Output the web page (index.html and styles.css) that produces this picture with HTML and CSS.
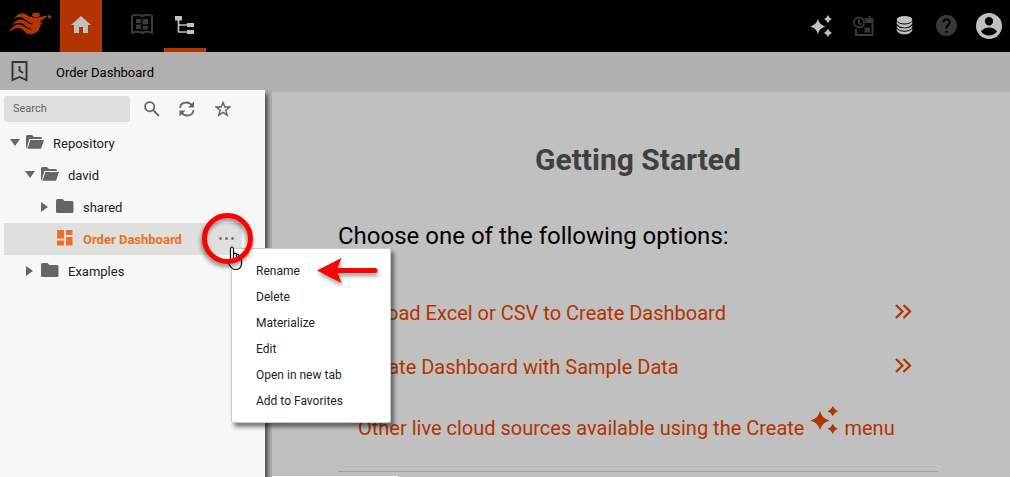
FILE: index.html
```html
<!DOCTYPE html>
<html lang="en">
<head>
<meta charset="utf-8">
<title>Order Dashboard</title>
<link rel="stylesheet" href="styles.css">
</head>
<body>
<svg class="defs" width="0" height="0">
  <symbol id="sparkles" viewBox="0 0 27 27"><path d="M9.7 4.5 C11.3 10 13.500 12.300 19.2 14 C13.500 15.700 11.3 18 9.7 23.5 C8.100 18 5.700 15.700 0 14 C5.700 12.300 8.100 10 9.7 4.5Z M22 0 Q23.300 3.700 27 5 Q23.300 6.300 22 10 Q20.700 6.300 17 5 Q20.700 3.700 22 0Z M22 17 Q23.300 20.700 27 22 Q23.300 23.300 22 27 Q20.700 23.300 17 22 Q20.700 20.700 22 17Z"/></symbol>
  <symbol id="folder" viewBox="0 0 18 14"><path d="M1.5 0H6.5L8.5 2H16Q17.500 2 17.500 3.5V12.5Q17.500 14 16 14H1.5Q0 14 0 12.5V1.5Q0 0 1.5 0Z"/></symbol>
  <symbol id="folder-open" viewBox="0 0 18 14"><path d="M1.500 0H6L8 2H14.500Q16 2 16 3.500V4H3.500L1.300 11V13.500Q0 13 0 12V1.500Q0 0 1.500 0Z M4.300 5H18L15.300 13Q15 13.700 14.300 13.700H1.600Z"/></symbol>
  <symbol id="chevrons" viewBox="0 0 17 15"><path d="M1 1 7.500 7.500 1 14M8.500 1 15 7.500 8.500 14" fill="none" stroke="currentColor" stroke-width="2.300"/></symbol>
</svg>
<header class="topbar">
  <svg class="logo" width="44" height="24" viewBox="0 0 44 24">
    <path d="M5 7C8 1.500 13-.5 18 3C22 6 27 6 31 5L37 3.500 38.500 4.500 32 8.500 31 11 34.500 9.500 31 14Q31 18 27 20.500C23 23.500 18 22.500 15 19C11 14.500 7 15 0 20C4 13 10 10.500 15 14.500C19 17.500 22 18 23.500 17C18 17 17 13 13 11.500C9 10 6 11 2.500 14C6 8 11 6 16 9C20 11.500 22 13 24.500 12C19 11 17 7 13 5.500C10 4.500 8 5 5 7Z" fill="#b23400"/>
    <ellipse cx="27" cy="3" rx="4" ry="2.200" fill="#b23400"/>
    <circle cx="40.500" cy="4.700" r="1.600" fill="#b23400"/>
  </svg>
  <div class="home"><svg width="20" height="18" viewBox="0 0 20 18"><path d="M10 0 20 9H17V17H12V11H8V17H3V9H0Z"/></svg></div>
  <div class="tab book"><svg width="22" height="21" viewBox="0 0 22 21"><path d="M1 2Q6-.5 11 2Q16-.5 21 2V19Q16 16.500 11 19Q6 16.500 1 19Z" fill="none" stroke="#393939" stroke-width="2"/><path d="M5 5H10V9H5ZM11.500 5H17V10.500H11.500ZM5 10.500H10V15H5ZM11.500 12H17V15.500H11.500Z" fill="#393939"/></svg></div>
  <div class="tab tree"><svg width="20" height="19" viewBox="0 0 20 19"><path d="M0 0H7V4.500H0ZM12 7H19V11H12ZM12 14H19V18H12Z"/><path d="M3.500 4V16H12M3.500 9H12" fill="none" stroke="#c0c0c0" stroke-width="1.700"/></svg></div>
  <div class="tools">
    <svg width="22" height="22"><use href="#sparkles"/></svg>
    <svg class="dim" width="21" height="21" viewBox="0 0 21 21"><circle cx="6" cy="6.500" r="5" fill="none" stroke="#393939" stroke-width="1.800"/><path d="M6 3.500V7L8.500 8.500M3 13V19H19.500V4H13" fill="none" stroke="#393939" stroke-width="2"/><path d="M11.500 2H20V7H12.500ZM11.500 11.500H17V16.500H11.500ZM15.500 0H17.500V3H15.500Z"/></svg>
    <svg class="db" width="17" height="20" viewBox="0 0 17 20"><ellipse cx="8.500" cy="4" rx="8.200" ry="4"/><path d="M.3 5.800Q3 9 8.500 9T16.700 5.800V8.200Q14 12 8.500 12T.3 8.200ZM.3 10Q3 13 8.500 13T16.700 10V12Q14 15.500 8.500 15.500T.3 12ZM.3 13.500Q3 16.500 8.500 16.500T16.700 13.500V15.500Q14 19.300 8.500 19.300T.3 15.500Z" class="bands"/></svg>
    <svg class="dim help" width="21" height="21" viewBox="2 2 20 20"><path d="M12 2C6.480 2 2 6.480 2 12s4.480 10 10 10 10-4.480 10-10S17.520 2 12 2zm1 17h-2v-2h2v2zm2.070-7.750l-.9.920C13.450 12.900 13 13.500 13 15h-2v-.5c0-1.100.45-2.100 1.170-2.830l1.240-1.260c.37-.36.590-.86.590-1.410 0-1.100-.9-2-2-2s-2 .9-2 2H8c0-2.210 1.790-4 4-4s4 1.790 4 4c0 .88-.36 1.680-.93 2.250z"/></svg>
    <svg width="26" height="26" viewBox="0 0 26 26"><path fill-rule="evenodd" d="M13 0A13 13 0 1 1 13 26A13 13 0 1 1 13 0ZM13 4A4.200 4.200 0 1 0 13 12.400A4.200 4.200 0 1 0 13 4ZM5 18.500Q8 22.500 13 22.500T21 18.500Q18 14.500 13 14.500T5 18.500Z"/></svg>
  </div>
</header>
<div class="crumbs">
  <svg width="17" height="21" viewBox="0 0 17 21"><path d="M1.500 1H15.500V19L8.500 16 1.500 19ZM8.500 5V9.500L12 12" fill="none" stroke="#333" stroke-width="1.900"/></svg>
  <span>Order Dashboard</span>
</div>
<div class="body">
  <aside class="sidebar">
    <div class="search-row">
      <div class="search">Search</div>
      <svg width="16" height="16" viewBox="0 0 16 16"><circle cx="5.700" cy="5.700" r="4.600"/><path d="M9 9 15 15"/></svg>
      <svg class="sync" width="18" height="16" viewBox="0 0 18 16"><path d="M2 7Q2.500 1.500 8.500 1.500Q12 1.500 14.500 5M15.500 9Q15 14.500 9 14.500Q5.500 14.500 3 11"/><path d="M16 .5V6.500H10ZM1.500 15.500V9.500H7.500Z" fill="#666" stroke="none"/></svg>
      <svg class="star" width="16" height="16" viewBox="0 0 16 16"><path d="M8 1.500 9.800 6H14.700L10.800 9.300 12.200 14.200 8 11.400 3.800 14.200 5.200 9.300 1.300 6H6.200Z"/></svg>
    </div>
    <div class="node l0"><i class="down"></i><svg width="18" height="14"><use href="#folder-open"/></svg><span>Repository</span></div>
    <div class="node l1"><i class="down"></i><svg width="18" height="14"><use href="#folder-open"/></svg><span>david</span></div>
    <div class="node l2"><i class="right"></i><svg width="18" height="14"><use href="#folder"/></svg><span>shared</span></div>
    <div class="node l2 selected"><i></i><svg width="16" height="16" viewBox="0 0 16 16"><path d="M0 0H7V8.500H0ZM0 10.500H7V15.500H0ZM9 0H15.500V5H9ZM9 7H15.500V15.500H9Z"/></svg><span>Order Dashboard</span><b class="dots"><i></i><i></i><i></i></b></div>
    <div class="node l1"><i class="right"></i><svg width="18" height="14"><use href="#folder"/></svg><span>Examples</span></div>
  </aside>
  <main class="main">
    <div class="content">
      <h1>Getting Started</h1>
      <h2>Choose one of the following options:</h2>
      <div class="option"><span>Upload Excel or CSV to Create Dashboard</span><svg width="17" height="15"><use href="#chevrons"/></svg></div>
      <div class="option second"><span>Create Dashboard with Sample Data</span><svg width="17" height="15"><use href="#chevrons"/></svg></div>
      <div class="other"><span>Other live cloud sources available using the Create</span><svg width="28" height="28" viewBox="0 0 27 27"><use href="#sparkles" width="27" height="27"/></svg><span>menu</span></div>
    </div>
    <div class="strip"></div>
  </main>
</div>
<div class="menu">
  <div>Rename</div><div>Delete</div><div>Materialize</div><div>Edit</div><div>Open in new tab</div><div>Add to Favorites</div>
</div>
<svg class="cursor" width="17" height="26" viewBox="0 0 17 26"><path d="M4.500 15V3Q4.500 1 6 1T7.500 3V8Q9 6.500 10.500 8V9Q12 7.500 13 9.500V11Q15 10 15.500 12V18Q15 23.500 9.500 23.500Q6 23.500 3.500 19L1 14.500Q2 13 4.500 15ZM7.500 8V13M10.500 9V13.500M13 11V14" fill="#fff" stroke="#111" stroke-width="1.200"/></svg>
<div class="ring"></div>
<svg class="arrow" width="64" height="30" viewBox="0 0 64 30"><path d="M19 14.500H59" stroke="#f00" stroke-width="5" stroke-linecap="round"/><path d="M1 14.500 25.500 2 20.500 14.500 25.500 27Z" fill="#f00"/></svg>
</body>
</html>
```
FILE: styles.css
```css
* { box-sizing: border-box; }
body { margin: 0; width: 1010px; height: 477px; overflow: hidden; position: relative; display: flex; flex-direction: column; font-family: Roboto, sans-serif; font-size: 13px; color: #222; background: #b0b0b0; }
svg { display: block; flex: none; }
.defs { position: absolute; }
.topbar { height: 52px; flex: none; display: flex; background: #000; fill: #c0c0c0; }
.logo { margin: 12px 7px 0 9px; }
.home { width: 42px; background: #b23400; padding: 16px 11px; }
.tab { width: 42px; height: 52px; }
.book { margin-left: 19px; padding: 14px 10px; }
.tree { margin-left: 1px; padding: 16px 11px; border-bottom: 4px solid #b23400; }
.tools { margin-left: auto; padding-right: 8px; display: flex; align-items: center; gap: 20px; }
.tools svg:first-child { margin-right: 1px; }
.dim { fill: #393939; }
.db { margin: 0 2px; padding-bottom: 1px; }
.help { margin: 0 -1px 2px 1px; }
.crumbs { height: 38px; flex: none; display: flex; align-items: center; gap: 28px; padding: 3px 0 0 11px; color: #000; }
.crumbs svg { margin-top: -2px; }
.body { flex: 1; min-height: 0; display: flex; }
.sidebar { width: 265px; flex: none; background: #f7f7f7; position: relative; box-shadow: 3px 4px 4px rgba(0,0,0,.55); clip-path: inset(0 -12px 0 0); }
.search-row { display: flex; align-items: center; height: 26px; margin: 6px 4px 5px; fill: none; stroke: #666; stroke-width: 1.8; }
.search { width: 126px; height: 26px; margin-right: 14px; padding: 0 9px; line-height: 25px; font-size: 11px; color: #666; border-radius: 3px; background: #dfdfdd; }
.sync { margin-left: 18px; }
.star { margin-left: 19px; stroke-width: 1.5; }
.node { display: flex; align-items: center; height: 32px; margin: 0 4px; fill: #666; }
.node span { margin-left: 9px; padding-top: 1px; }
.node svg { margin-top: -2px; }
.node > i { width: 10px; height: 10px; margin-right: 7px; flex: none; }
.down::before, .right::before { content: ""; display: block; }
.down::before { border: 5px solid transparent; border-top: 7px solid #666; border-bottom: 0; margin-top: 1px; margin-left: 1px; }
.right::before { border: 5px solid transparent; border-left: 7px solid #666; border-right: 0; margin-left: 2px; }
.l0 { padding-left: 5px; }
.l1 { padding-left: 20px; }
.l2 { padding-left: 35px; }
.selected { background: #dfdfdd; color: #ec6f25; fill: #ec6f25; font-weight: bold; margin-right: 23px; }
.selected svg { margin-left: 1px; margin-right: 1px; }
.dots { display: flex; gap: 3px; margin: -2px 8px 0 auto; }
.dots i { width: 3px; height: 3px; border-radius: 50%; background: #777; }
.main { flex: 1; margin: 2px 0 0 7px; background: #c0c0c0; overflow: hidden; display: flex; flex-direction: column; }
.content { width: 600px; flex: none; height: 380px; margin-left: 66px; border-bottom: 1px solid #a0a0a0; color: #b23400; font-size: 20px; }
h1 { margin: 48px 0 0; height: 40px; line-height: 40px; font-size: 30px; text-align: center; color: #404040; }
h2 { margin: 40px 0 0; height: 32px; line-height: 32px; font-size: 24px; font-weight: 400; color: #000; }
.option { display: flex; align-items: center; justify-content: space-between; height: 30px; margin-top: 46px; padding: 0 26px 0 20px; }
.option svg { margin-bottom: 3px; }
.second { margin-top: 24px; }
.other { display: flex; height: 36px; line-height: 36px; margin: 28px 0 0 20px; fill: #b23400; white-space: nowrap; }
.other svg { margin: -4px 6px 0; }
.strip { height: 1px; width: 126px; background: #fff; margin-top: 4px; }
.menu { position: absolute; left: 231px; top: 248px; width: 160px; height: 175px; padding: 9px 0 0 24px; background: #fff; border: 1px solid #ccc; border-radius: 2px; box-shadow: 3px 4px 4px rgba(0,0,0,.5); clip-path: inset(-1px -12px -12px -1px); font-size: 12px; line-height: 26px; }
.cursor { position: absolute; left: 226px; top: 246px; }
.ring { position: absolute; left: 202px; top: 213px; width: 51px; height: 51px; border: 5px solid #f00; border-radius: 50%; filter: drop-shadow(-1px 3px 2px rgba(0,0,0,.45)); }
.arrow { position: absolute; left: 316px; top: 256px; filter: drop-shadow(1px 3px 2px rgba(0,0,0,.4)); }
```
